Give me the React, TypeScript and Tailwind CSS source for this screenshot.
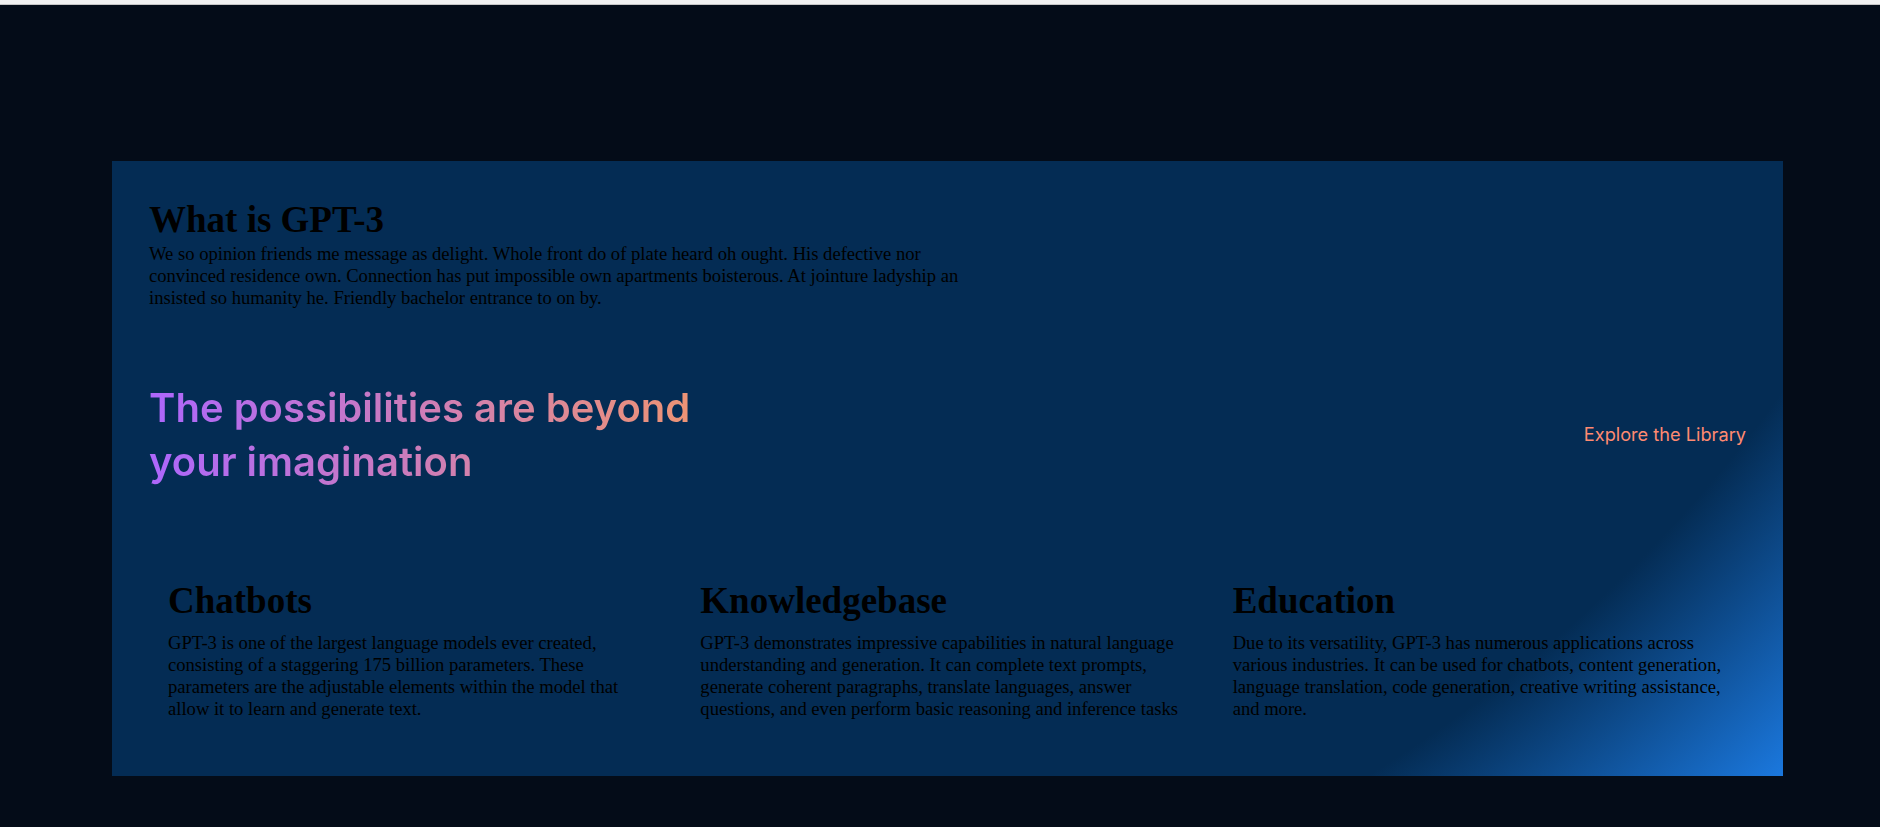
const features = [
  {
    title: 'Chatbots',
    text: 'GPT-3 is one of the largest language models ever created, consisting of a staggering 175 billion parameters. These parameters are the adjustable elements within the model that allow it to learn and generate text.',
  },
  {
    title: 'Knowledgebase',
    text: 'GPT-3 demonstrates impressive capabilities in natural language understanding and generation. It can complete text prompts, generate coherent paragraphs, translate languages, answer questions, and even perform basic reasoning and inference tasks',
  },
  {
    title: 'Education',
    text: 'Due to its versatility, GPT-3 has numerous applications across various industries. It can be used for chatbots, content generation, language translation, code generation, creative writing assistance, and more.',
  },
]

function Feature({ title, text }: { title: string; text: string }) {
  return (
    <div className="mx-[19px] flex-1">
      <h1 className="font-['Liberation_Serif',serif] text-[37px] font-bold leading-[44px] text-black">{title}</h1>
      <p className="mt-[9px] font-['Liberation_Serif',serif] text-[18.6px] leading-[22px] text-black">{text}</p>
    </div>
  )
}

export default function App() {
  return (
    <div className="min-h-screen bg-[#040c18]">
      <div className="h-[5px] border-b border-[#c6c6c6] bg-[#f1f1f1]" />
      <section className="ml-[112px] mt-[156px] flex h-[615px] w-[1671px] flex-col bg-[radial-gradient(circle_at_30%_-100%,#042c54_25%,rgba(4,44,84,1)_85%,rgba(27,120,222,1)_100%)] px-[37px] pt-[37px]">
        <div>
          <h1 className="font-['Liberation_Serif',serif] text-[37px] font-bold leading-[44px] text-black">What is GPT-3</h1>
          <p className="mt-px w-[830px] font-['Liberation_Serif',serif] text-[18.6px] leading-[22px] text-black">
            We so opinion friends me message as delight. Whole front do of plate heard oh ought. His defective nor
            convinced residence own. Connection has put impossible own apartments boisterous. At jointure ladyship an
            insisted so humanity he. Friendly bachelor entrance to on by.
          </p>
        </div>

        <div className="mt-[72px] flex items-center justify-between">
          <h2 className="w-[580px] bg-[linear-gradient(89.97deg,#ae67fa_1.84%,#f49867_102.67%)] bg-clip-text font-['Inter',sans-serif] text-[40px] font-semibold leading-[54px] text-transparent">
            The possibilities are beyond your imagination
          </h2>
          <p className="font-['Inter',sans-serif] text-[18.2px] font-normal text-[#ff8a71]">Explore the Library</p>
        </div>

        <div className="mt-[90px] flex">
          {features.map((f) => (
            <Feature key={f.title} title={f.title} text={f.text} />
          ))}
        </div>
      </section>
    </div>
  )
}
